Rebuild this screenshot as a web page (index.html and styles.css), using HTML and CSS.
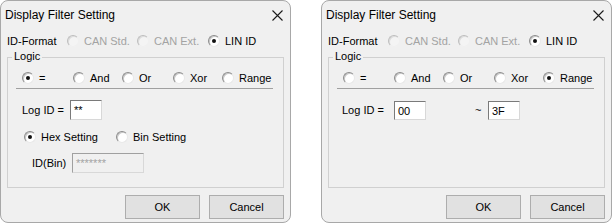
FILE: index.html
```html
<html>

<head>
  <title>Display Filter Setting</title>
  <meta charset="utf-8">
  <link rel="stylesheet" href="styles.css">
</head>

<body>
  <!-- hex mode -->
  <div class="dialog">
    <div class="titlebar">
      <span class="title">Display Filter Setting</span>
      <span class="close">
        <svg width="11" height="11" viewBox="0 0 11 11"><path d="M0.5 0.5 L10.5 10.5 M10.5 0.5 L0.5 10.5" stroke="#1a1a1a" stroke-width="1.1" fill="none"/></svg>
      </span>
    </div>
    <div class="idformat">
      <span class="fmt-label">ID-Format</span>
      <span class="opt std disabled"><i class="radio"></i>CAN Std.</span>
      <span class="opt ext disabled"><i class="radio"></i>CAN Ext.</span>
      <span class="opt"><i class="radio checked"></i>LIN ID</span>
    </div>
    <div class="group">
      <span class="group-label">Logic</span>
      <div class="logic">
        <span class="opt"><i class="radio checked"></i>=</span>
        <span class="opt"><i class="radio"></i>And</span>
        <span class="opt"><i class="radio"></i>Or</span>
        <span class="opt"><i class="radio"></i>Xor</span>
        <span class="opt"><i class="radio"></i>Range</span>
      </div>
      <div class="sep"></div>
      <div class="logid">
        <span class="logid-label">Log ID =</span>
        <span class="edit">**</span>
      </div>
      <div class="mode">
        <span class="opt hex"><i class="radio checked"></i>Hex Setting</span>
        <span class="opt"><i class="radio"></i>Bin Setting</span>
      </div>
      <div class="bin">
        <span class="bin-label">ID(Bin)</span>
        <span class="edit wide disabled">*******</span>
      </div>
    </div>
    <div class="buttons">
      <span class="btn">OK</span>
      <span class="btn">Cancel</span>
    </div>
  </div>

  <!-- range mode -->
  <div class="dialog">
    <div class="titlebar">
      <span class="title">Display Filter Setting</span>
      <span class="close">
        <svg width="11" height="11" viewBox="0 0 11 11"><path d="M0.5 0.5 L10.5 10.5 M10.5 0.5 L0.5 10.5" stroke="#1a1a1a" stroke-width="1.1" fill="none"/></svg>
      </span>
    </div>
    <div class="idformat">
      <span class="fmt-label">ID-Format</span>
      <span class="opt std disabled"><i class="radio"></i>CAN Std.</span>
      <span class="opt ext disabled"><i class="radio"></i>CAN Ext.</span>
      <span class="opt"><i class="radio checked"></i>LIN ID</span>
    </div>
    <div class="group">
      <span class="group-label">Logic</span>
      <div class="logic">
        <span class="opt"><i class="radio"></i>=</span>
        <span class="opt"><i class="radio"></i>And</span>
        <span class="opt"><i class="radio"></i>Or</span>
        <span class="opt"><i class="radio"></i>Xor</span>
        <span class="opt"><i class="radio checked"></i>Range</span>
      </div>
      <div class="sep"></div>
      <div class="logid range">
        <span class="logid-label">Log ID =</span>
        <span class="edit">00</span>
        <span class="tilde">~</span>
        <span class="edit">3F</span>
      </div>
    </div>
    <div class="buttons">
      <span class="btn">OK</span>
      <span class="btn">Cancel</span>
    </div>
  </div>
</body>

</html>
```

FILE: styles.css
```css
* {
  margin: 0;
  padding: 0;
  box-sizing: border-box;
}

body {
  display: flex;
  gap: 30px;
  background: #fff;
  font-family: "Liberation Sans", Arial, sans-serif;
  font-size: 11px;
  color: #000;
}

.dialog {
  width: 291px;
  height: 223px;
  background: #f0f0f0;
  border: 1px solid #a8a8a8;
  border-radius: 8px;
}

.titlebar {
  display: flex;
  align-items: center;
  justify-content: space-between;
  height: 27px;
  padding: 0 7px 0 4px;
}

.title {
  font-size: 12px;
}

.close {
  display: flex;
  margin-top: 1px;
}

/* radio buttons */
.opt {
  display: inline-flex;
  align-items: center;
  white-space: nowrap;
}

.radio {
  display: inline-block;
  position: relative;
  width: 12px;
  height: 12px;
  margin-right: 5px;
  border-radius: 50%;
  background: #fff;
  border: 1px solid;
  border-color: #8c8c8c #e8e8e8 #e8e8e8 #8c8c8c;
  box-shadow: inset 1px 1px 0 #c8c8c8;
}

.radio.checked::after {
  content: "";
  position: absolute;
  left: 3px;
  top: 3px;
  width: 4px;
  height: 4px;
  border-radius: 50%;
  background: #111;
}

.disabled {
  color: #a3a3a3;
}

.disabled .radio {
  background: #f4f4f4;
  border-color: #bdbdbd #f0f0f0 #f0f0f0 #bdbdbd;
  box-shadow: inset 1px 1px 0 #dcdcdc;
}

.idformat {
  display: flex;
  align-items: center;
  height: 16px;
  margin-top: 5px;
  padding-left: 6px;
}

.fmt-label {
  width: 60px;
}

.idformat .std {
  width: 70px;
}

.idformat .ext {
  width: 71px;
}

/* logic group */
.group {
  position: relative;
  height: 131px;
  margin: 8px 6px 0 6px;
  border: 1px solid #d0d0d0;
}

.group-label {
  position: absolute;
  left: 4px;
  top: -8px;
  padding: 0 2px;
  background: #f0f0f0;
}

.logic {
  display: grid;
  grid-template-columns: 51px 49px 51px 49px auto;
  align-items: center;
  height: 14px;
  margin-top: 13px;
  padding-left: 14px;
}

.sep {
  height: 1px;
  margin: 3px 10px 0 8px;
  background: #a0a0a0;
}

.logid {
  display: flex;
  align-items: center;
  height: 20px;
  margin-top: 11px;
  padding-left: 14px;
}

.logid-label {
  width: 48px;
}

.edit {
  display: inline-block;
  width: 32px;
  height: 20px;
  padding: 2px 0 0 3px;
  background: #fff;
  border: 1px solid;
  border-color: #7a7a7a #d8d8d8 #d8d8d8 #7a7a7a;
  line-height: 14px;
}

.edit.wide {
  width: 72px;
}

.edit.disabled {
  background: #f0f0f0;
  border-color: #a0a0a0 #d8d8d8 #d8d8d8 #a0a0a0;
}

.logid.range {
  padding-left: 13px;
}

.logid.range .logid-label {
  width: 52px;
}

.logid.range .edit {
  height: 19px;
}

.tilde {
  width: 62px;
  padding-left: 49px;
}

.mode {
  display: flex;
  align-items: center;
  height: 14px;
  margin-top: 10px;
  padding-left: 16px;
}

.mode .hex {
  width: 92px;
}

.bin {
  display: flex;
  align-items: center;
  height: 20px;
  margin-top: 9px;
  padding-left: 24px;
}

.bin-label {
  width: 40px;
}

/* buttons */
.buttons {
  display: flex;
  justify-content: flex-end;
  gap: 9px;
  margin-top: 7px;
  padding-right: 6px;
}

.btn {
  display: flex;
  align-items: center;
  justify-content: center;
  width: 75px;
  height: 24px;
  background: #e1e1e1;
  border: 1px solid #adadad;
}
```
